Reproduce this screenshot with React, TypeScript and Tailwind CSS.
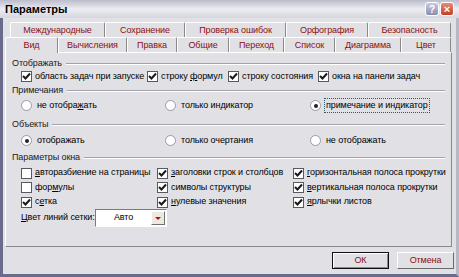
import React from 'react'

const font = { fontFamily: '"Liberation Sans", "DejaVu Sans", sans-serif' }

const row1 = [
  { t: 'Международные', w: 'w-[95px]' },
  { t: 'Сохранение', w: 'w-[80px]' },
  { t: 'Проверка ошибок', w: 'w-[101px]' },
  { t: 'Орфография', w: 'w-[82px]' },
  { t: 'Безопасность', w: 'w-[83px]' },
]

const row2 = [
  { t: 'Вычисления', w: 'w-[69px]' },
  { t: 'Правка', w: 'w-[50px]' },
  { t: 'Общие', w: 'w-[52px]' },
  { t: 'Переход', w: 'w-[55px]' },
  { t: 'Список', w: 'w-[51px]' },
  { t: 'Диаграмма', w: 'w-[66px]' },
  { t: 'Цвет', w: 'w-[50px]' },
]

function Tab({ label, w }: { label: string; w: string }) {
  return (
    <div
      className={`${w} h-[15px] flex items-center justify-center border-t border-l border-r border-t-white border-l-white border-r-[#8a8a8a] rounded-t-[2px] text-[#8b1010] leading-none`}
    >
      {label}
    </div>
  )
}

function Check({ on }: { on?: boolean }) {
  return (
    <span className="w-[11px] h-[11px] shrink-0 bg-white border border-[#58585e] flex items-center justify-center">
      {on && (
        <svg width="9" height="9" viewBox="0 0 9 9">
          <path d="M1 4 L3.5 6.5 L8 1.5" stroke="#1a1a1a" strokeWidth="2" fill="none" />
        </svg>
      )}
    </span>
  )
}

function Radio({ on }: { on?: boolean }) {
  return (
    <span className="w-[11px] h-[11px] shrink-0 rounded-full bg-white border border-[#9a9aa0] flex items-center justify-center">
      {on && <span className="w-[4px] h-[4px] rounded-full bg-[#222]" />}
    </span>
  )
}

function CheckItem({ on, children, w }: { on?: boolean; children: React.ReactNode; w: string }) {
  return (
    <div className={`${w} shrink-0 flex items-center gap-[3px]`}>
      <Check on={on} />
      <span className="whitespace-nowrap">{children}</span>
    </div>
  )
}

function RadioItem({ on, children, w, focus }: { on?: boolean; children: React.ReactNode; w: string; focus?: boolean }) {
  return (
    <div className={`${w} shrink-0 flex items-center gap-[3px]`}>
      <Radio on={on} />
      <span className={`whitespace-nowrap px-[1px] ${focus ? 'border border-dotted border-[#2a5a6a]' : 'border border-transparent'}`}>
        {children}
      </span>
    </div>
  )
}

function Section({ label }: { label: string }) {
  return (
    <div className="h-[13px] flex items-center gap-[4px]">
      <span className="text-[#1a1a1a]">{label}</span>
      <div className="flex-1 border-t border-b border-t-[#a2a2a8] border-b-white" />
    </div>
  )
}

export default function App() {
  return (
    <div
      className="w-[459px] h-[277px] bg-[#e1e0e5] border-l-[3px] border-r-[3px] border-b-[3px] border-l-[#6a6a8c] border-r-[#b8b8c4] border-b-[#6a6a8c] flex flex-col text-[9px] tracking-[-0.1px] text-black"
      style={font}
    >
      {/* title bar */}
      <div className="h-[18px] -ml-[3px] -mr-[3px] flex items-center justify-between px-[5px] bg-gradient-to-b from-[#bcbccc] via-[#ececf2] to-[#d6d6de]">
        <span className="font-bold text-[11px] tracking-normal text-black">Параметры</span>
        <div className="flex gap-[1px]">
          <div className="w-[14px] h-[14px] rounded-[3px] border border-white bg-gradient-to-b from-[#c8cbe0] to-[#8a8eac] flex items-center justify-center text-white text-[10px] font-bold">
            ?
          </div>
          <div className="w-[14px] h-[14px] rounded-[3px] border border-white bg-gradient-to-b from-[#e98a70] to-[#c43c26] flex items-center justify-center text-white text-[11px] font-bold leading-none">
            ×
          </div>
        </div>
      </div>

      <div className="flex-1 flex flex-col pl-[2px] pr-[1px]">
        {/* tabs */}
        <div className="mt-[4px] flex pl-[5px]">
          {row1.map((r) => (
            <Tab key={r.t} label={r.t} w={r.w} />
          ))}
        </div>
        <div className="flex h-[15px] items-end">
          <div className="w-[53px] h-[16px] -mb-[1px] relative z-10 flex items-center justify-center border-t border-l border-r border-t-white border-l-white border-r-[#8a8a8a] bg-[#e1e0e5] text-[#8b1010] rounded-t-[2px]">
            Вид
          </div>
          {row2.map((r) => (
            <Tab key={r.t} label={r.t} w={r.w} />
          ))}
        </div>

        {/* panel */}
        <div className="w-[447px] h-[195px] border border-t-white border-l-white border-r-[#8a8a8a] border-b-[#8a8a8a] px-[6px] pt-[4px]">
          <Section label="Отображать" />
          <div className="h-[13px] flex items-center pl-[9px]">
            <CheckItem on w="w-[126px]">область задач при запуске</CheckItem>
            <CheckItem on w="w-[81px]">
              строку <u>ф</u>ормул
            </CheckItem>
            <CheckItem on w="w-[90px]">строку состояния</CheckItem>
            <CheckItem on w="w-[120px]">окна на панели задач</CheckItem>
          </div>

          <div className="mt-[1px]">
            <Section label="Примечания" />
          </div>
          <div className="mt-[2px] h-[13px] flex items-center pl-[9px]">
            <RadioItem w="w-[144px]">
              не отобра<u>ж</u>ать
            </RadioItem>
            <RadioItem w="w-[145px]">только индикатор</RadioItem>
            <RadioItem on focus w="w-[130px]">
              примечание и индикатор
            </RadioItem>
          </div>

          <div className="mt-[6px]">
            <Section label="Объекты" />
          </div>
          <div className="mt-[3px] h-[13px] flex items-center pl-[9px]">
            <RadioItem on w="w-[144px]">
              отображать
            </RadioItem>
            <RadioItem w="w-[145px]">только очертания</RadioItem>
            <RadioItem w="w-[130px]">не отображать</RadioItem>
          </div>

          <div className="mt-[4px]">
            <Section label="Параметры окна" />
          </div>
          <div className="mt-[2px] flex flex-col pl-[9px]">
            <div className="h-[14px] flex items-center">
              <CheckItem w="w-[136px]">
                <u>а</u>вторазбиение на страницы
              </CheckItem>
              <CheckItem on w="w-[136px]">
                <u>з</u>аголовки строк и столбцов
              </CheckItem>
              <CheckItem on w="w-[150px]">
                <u>г</u>оризонтальная полоса прокрутки
              </CheckItem>
            </div>
            <div className="h-[15px] flex items-center">
              <CheckItem w="w-[136px]">
                фор<u>м</u>улы
              </CheckItem>
              <CheckItem on w="w-[136px]">
                символы структуры
              </CheckItem>
              <CheckItem on w="w-[150px]">
                <u>в</u>ертикальная полоса прокрутки
              </CheckItem>
            </div>
            <div className="h-[14px] flex items-center">
              <CheckItem on w="w-[136px]">
                с<u>е</u>тка
              </CheckItem>
              <CheckItem on w="w-[136px]">
                <u>н</u>улевые значения
              </CheckItem>
              <CheckItem on w="w-[150px]">
                <u>я</u>рлычки листов
              </CheckItem>
            </div>
            <div className="h-[18px] flex items-center">
              <span className="w-[74px] whitespace-nowrap">
                <u>Ц</u>вет линий сетки:
              </span>
              <div className="w-[72px] h-[18px] bg-white border border-t-[#7a7a80] border-l-[#7a7a80] border-r-white border-b-white flex items-center">
                <span className="flex-1 text-center">Авто</span>
                <div className="w-[14px] h-[14px] mr-[1px] bg-[#ece9e0] border border-t-white border-l-white border-r-[#707070] border-b-[#707070] flex items-center justify-center">
                  <svg width="6" height="3" viewBox="0 0 6 3">
                    <path d="M0 0 H6 L3 3 Z" fill="#b01010" />
                  </svg>
                </div>
              </div>
            </div>
          </div>
        </div>

        {/* buttons */}
        <div className="mt-[5px] flex justify-end gap-[8px] pr-[1px]">
          <div className="w-[57px] h-[17px] border border-[#101010] bg-[#e1e0e5] flex items-center justify-center text-[#8b1010] shadow-[inset_1px_1px_0_#ffffff,inset_-1px_-1px_0_#8a8a8a]">
            ОК
          </div>
          <div className="w-[57px] h-[17px] border border-t-white border-l-white border-r-[#6a6a6a] border-b-[#6a6a6a] bg-[#e1e0e5] flex items-center justify-center text-[#8b1010]">
            Отмена
          </div>
        </div>
      </div>
    </div>
  )
}
